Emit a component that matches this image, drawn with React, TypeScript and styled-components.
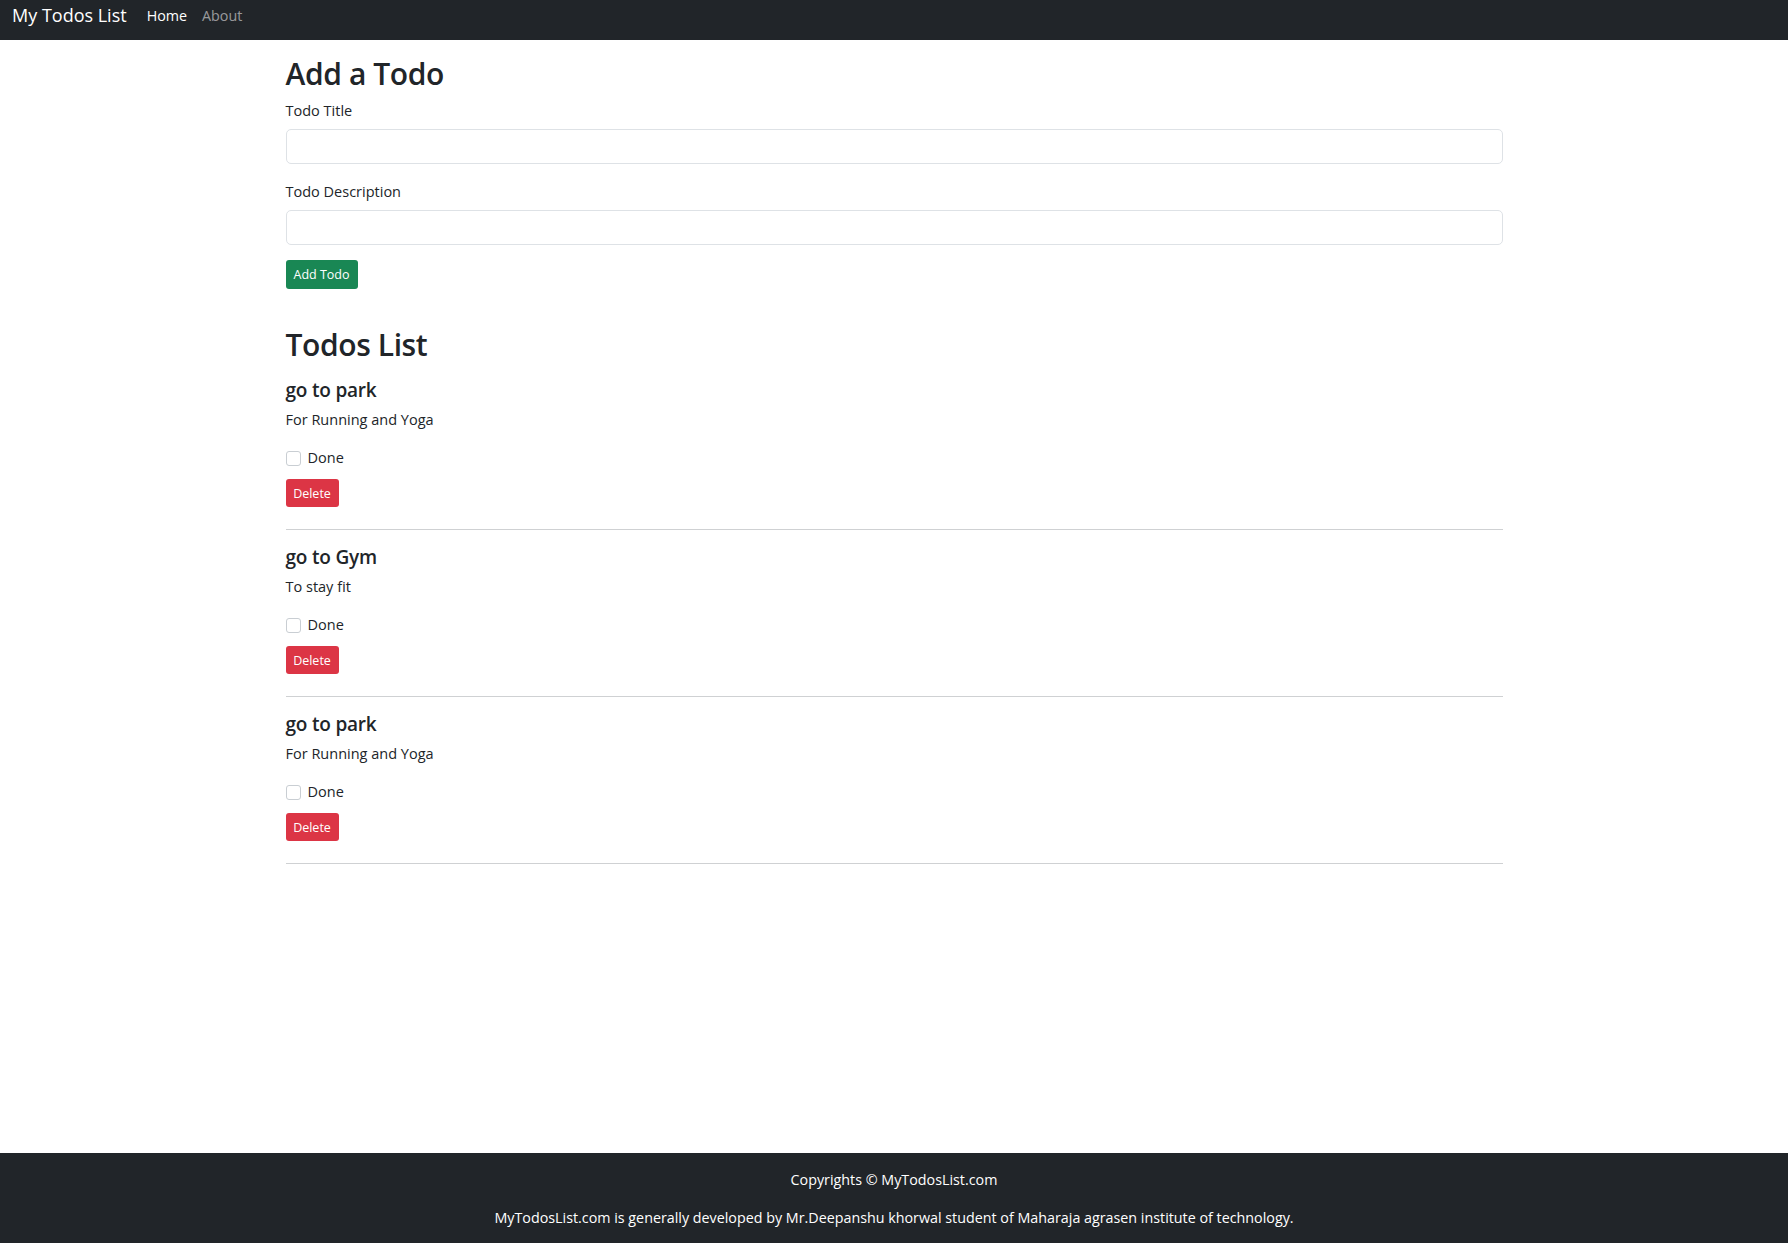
import React from "react";
import styled, { createGlobalStyle } from "styled-components";

const GlobalStyle = createGlobalStyle`
  * { box-sizing: border-box; }
  html, body { margin: 0; padding: 0; }
  body {
    font-family: "Open Sans", "Noto Sans", sans-serif;
    color: #212529;
    background: #fff;
  }
`;

const Page = styled.div`
  min-height: 100vh;
  display: flex;
  flex-direction: column;
`;

const Navbar = styled.nav`
  height: 40px;
  background: #212529;
  display: flex;
  align-items: center;
  padding: 0 12px 10px;
  gap: 20px;
`;

const Brand = styled.a`
  color: #fff;
  font-size: 18px;
  text-decoration: none;
`;

const NavLinks = styled.div`
  display: flex;
  gap: 15px;
`;

const NavLink = styled.a<{ $active?: boolean }>`
  color: ${(p) => (p.$active ? "#fff" : "rgba(255,255,255,0.55)")};
  font-size: 14.3px;
  text-decoration: none;
`;

const Container = styled.main`
  width: 1217px;
  margin: 0 auto;
  flex: 1;
`;

const SectionTitle = styled.h3<{ $top: number }>`
  font-size: 30px;
  font-weight: 600;
  letter-spacing: -0.4px;
  line-height: 36px;
  margin: ${(p) => p.$top}px 0 0;
`;

const Field = styled.div`
  margin-top: 8px;
  & + & {
    margin-top: 17px;
  }
`;

const Label = styled.label`
  display: block;
  font-size: 14.5px;
  line-height: 22px;
  margin-bottom: 7px;
`;

const Input = styled.input`
  display: block;
  width: 100%;
  height: 35px;
  border: 1px solid #dee2e6;
  border-radius: 5px;
  background: #fff;
  font-family: inherit;
  font-size: 15px;
  padding: 6px 12px;
  outline: none;
`;

const Button = styled.button<{ $variant: "success" | "danger" }>`
  display: flex;
  align-items: center;
  justify-content: center;
  padding: 0;
  border: none;
  border-radius: 3px;
  color: #fff;
  background: ${(p) => (p.$variant === "success" ? "#198754" : "#dc3545")};
  font-family: inherit;
  font-size: 12.5px;
  white-space: nowrap;
  cursor: pointer;
`;

const AddButton = styled(Button)`
  margin-top: 15px;
  width: 72px;
  height: 29px;
`;

const TodoItem = styled.div`
  padding-top: 15px;
`;

const TodoTitle = styled.h5`
  font-size: 19px;
  font-weight: 600;
  letter-spacing: -0.2px;
  line-height: 24px;
  margin: 0;
`;

const TodoDesc = styled.p`
  font-size: 14.5px;
  line-height: 22px;
  margin: 7px 0 0;
`;

const CheckRow = styled.label`
  display: flex;
  align-items: center;
  gap: 7px;
  margin-top: 17px;
  font-size: 14.5px;
  line-height: 20px;
`;

const CheckBox = styled.span`
  width: 15px;
  height: 15px;
  border: 1px solid #c9ced3;
  border-radius: 3px;
  background: #fff;
`;

const DeleteButton = styled(Button)`
  margin-top: 11px;
  width: 53px;
  height: 28px;
`;

const Divider = styled.hr`
  border: none;
  border-top: 1px solid #cfd1d3;
  margin: 22px 0 0;
`;

const Footer = styled.footer`
  background: #212529;
  color: #fff;
  height: 90px;
  display: flex;
  flex-direction: column;
  align-items: center;
  padding-top: 16px;
  gap: 16px;
  font-size: 14.3px;
  line-height: 22px;
`;

const FooterLine = styled.p`
  margin: 0;
`;

const todos = [
  { title: "go to park", desc: "For Running and Yoga" },
  { title: "go to Gym", desc: "To stay fit" },
  { title: "go to park", desc: "For Running and Yoga" },
];

export default function App() {
  return (
    <Page>
      <GlobalStyle />
      <Navbar>
        <Brand href="#">My Todos List</Brand>
        <NavLinks>
          <NavLink $active href="#">Home</NavLink>
          <NavLink href="#">About</NavLink>
        </NavLinks>
      </Navbar>
      <Container>
        <SectionTitle $top={16}>Add a Todo</SectionTitle>
        <Field>
          <Label>Todo Title</Label>
          <Input />
        </Field>
        <Field>
          <Label>Todo Description</Label>
          <Input />
        </Field>
        <AddButton $variant="success">Add Todo</AddButton>
        <SectionTitle $top={38}>Todos List</SectionTitle>
        {todos.map((t, i) => (
          <TodoItem key={i}>
            <TodoTitle>{t.title}</TodoTitle>
            <TodoDesc>{t.desc}</TodoDesc>
            <CheckRow>
              <CheckBox />
              Done
            </CheckRow>
            <DeleteButton $variant="danger">Delete</DeleteButton>
            <Divider />
          </TodoItem>
        ))}
      </Container>
      <Footer>
        <FooterLine>Copyrights © MyTodosList.com</FooterLine>
        <FooterLine>
          MyTodosList.com is generally developed by Mr.Deepanshu khorwal student of Maharaja agrasen institute of technology.
        </FooterLine>
      </Footer>
    </Page>
  );
}
